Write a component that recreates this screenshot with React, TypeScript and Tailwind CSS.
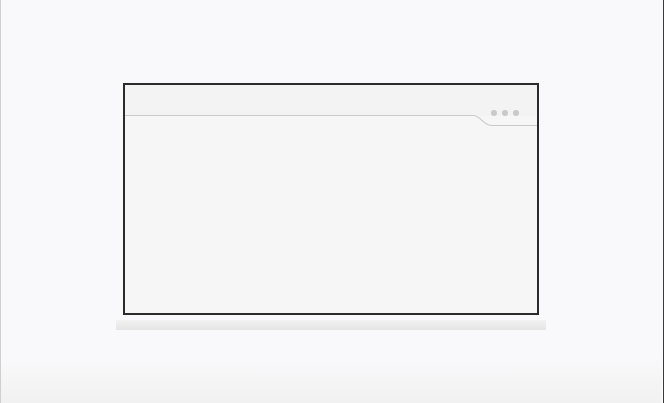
export default function App() {
  return (
    <main className="w-[664px] h-[403px] bg-[#f9f9fb] border-l border-l-[#cfcfd2] border-r border-r-[#3a3a3a] pr-[2px] flex flex-col items-center overflow-hidden">
      {/* browser window */}
      <div className="mt-[83px] w-[416px] h-[232px] border-2 border-[#2b2b2b] bg-[#f6f6f6] flex flex-col">
        <div className="relative h-[44px] w-full">
          <div className="absolute inset-x-0 top-0 h-[31px] bg-[#f3f3f3]"></div>
          <svg className="absolute inset-0" width="412" height="44" viewBox="0 0 412 44">
            <path d="M0 30.5 H348 C356 30.5 358 40.5 367 40.5 H412" fill="none" stroke="#cacaca" strokeWidth="1.1" />
          </svg>
          <div className="absolute right-[18px] top-[25px] flex gap-[5px]">
            <span className="w-[6px] h-[6px] rounded-full bg-[#c9c9c9]"></span>
            <span className="w-[6px] h-[6px] rounded-full bg-[#c9c9c9]"></span>
            <span className="w-[6px] h-[6px] rounded-full bg-[#c9c9c9]"></span>
          </div>
        </div>
        <div className="flex-1"></div>
      </div>

      {/* shelf */}
      <div className="mt-[5px] w-[430px] h-[10px] bg-gradient-to-b from-[#f2f2f2] to-[#e5e5e5]"></div>

      {/* floor */}
      <div className="mt-auto w-full h-[45px] bg-gradient-to-b from-[#f9f9fb] to-[#f1f1f1]"></div>
    </main>
  );
}
